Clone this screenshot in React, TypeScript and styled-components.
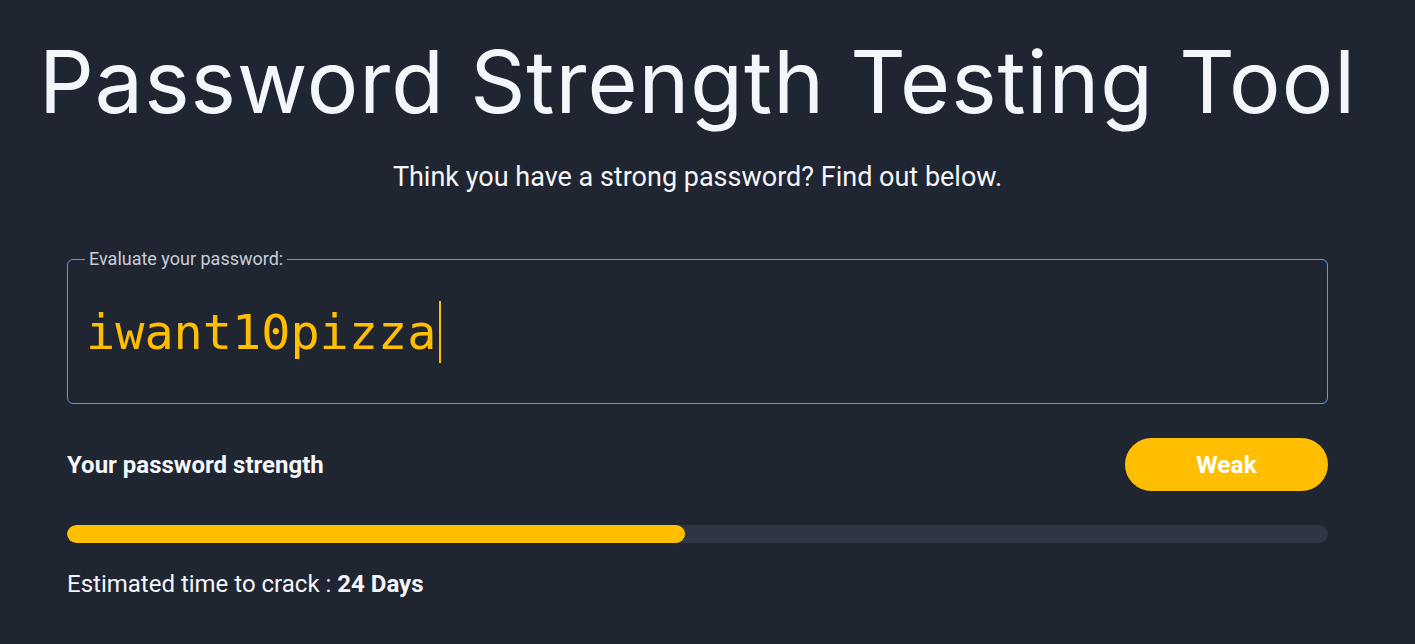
import React from 'react';
import styled, { createGlobalStyle } from 'styled-components';

const GlobalStyle = createGlobalStyle`
  html, body {
    margin: 0;
    padding: 0;
    background: #202532;
  }
  body {
    font-family: Roboto, 'Liberation Sans', sans-serif;
    color: #f4f6fa;
  }
`;

const App = () => {
  const password = 'iwant10pizza';
  const strength = 49;

  return (
    <Page>
      <GlobalStyle />
      <Title>Password Strength Testing Tool</Title>
      <Subtitle>Think you have a strong password? Find out below.</Subtitle>
      <Content>
        <Field>
          <Legend>Evaluate your password:</Legend>
          <InputArea>
            <PasswordText>{password}</PasswordText>
            <Caret />
          </InputArea>
        </Field>
        <StrengthRow>
          <StrengthLabel>Your password strength</StrengthLabel>
          <Badge>Weak</Badge>
        </StrengthRow>
        <Track>
          <Fill style={{ width: `${strength}%` }} />
        </Track>
        <Estimate>
          Estimated time to crack : <b>24 Days</b>
        </Estimate>
      </Content>
    </Page>
  );
};

const Page = styled.div`
  width: 1395px;
  min-height: 644px;
  display: flex;
  flex-direction: column;
  align-items: center;
`;

const Title = styled.h1`
  margin: 30px 0 0;
  font-family: Inter, 'Open Sans', sans-serif;
  font-weight: 400;
  font-size: 86px;
  line-height: 104px;
  letter-spacing: 1px;
  color: #f3f6fa;
  white-space: nowrap;
`;

const Subtitle = styled.p`
  margin: 27px 0 0;
  font-size: 27px;
  line-height: 32px;
  color: #f4f6fa;
`;

const Content = styled.div`
  width: 1261px;
  margin-top: 54px;
  display: flex;
  flex-direction: column;
`;

const Field = styled.fieldset`
  margin: 0;
  padding: 0 20px;
  height: 157px;
  box-sizing: border-box;
  border: 1px solid #5e9ce6;
  border-radius: 6px;
  min-width: 0;
`;

const Legend = styled.legend`
  margin-left: -3px;
  padding: 0 4px;
  font-size: 18px;
  line-height: 24px;
  color: #c9ced8;
`;

const InputArea = styled.div`
  height: 121px;
  margin-left: -2px;
  display: flex;
  align-items: center;
`;

const PasswordText = styled.span`
  font-family: 'DejaVu Sans Mono', monospace;
  font-size: 48.5px;
  line-height: 62px;
  color: #ffbf00;
  white-space: pre;
`;

const Caret = styled.span`
  width: 2px;
  height: 62px;
  margin-left: 3px;
  background: #ffbf00;
`;

const StrengthRow = styled.div`
  margin-top: 34px;
  display: flex;
  justify-content: space-between;
  align-items: center;
`;

const StrengthLabel = styled.span`
  font-size: 24px;
  font-weight: 700;
  color: #f4f6fa;
`;

const Badge = styled.span`
  width: 203px;
  height: 53px;
  border-radius: 27px;
  background: #ffbf00;
  display: flex;
  align-items: center;
  justify-content: center;
  font-size: 24.5px;
  font-weight: 700;
  color: #ffffff;
`;

const Track = styled.div`
  margin-top: 34px;
  height: 18px;
  border-radius: 9px;
  background: #2e3643;
  overflow: hidden;
`;

const Fill = styled.div`
  height: 100%;
  border-radius: 9px;
  background: #ffbf00;
`;

const Estimate = styled.p`
  margin: 27px 0 0;
  font-size: 24px;
  line-height: 28px;
  color: #f4f6fa;

  b {
    font-weight: 700;
  }
`;

export default App;
